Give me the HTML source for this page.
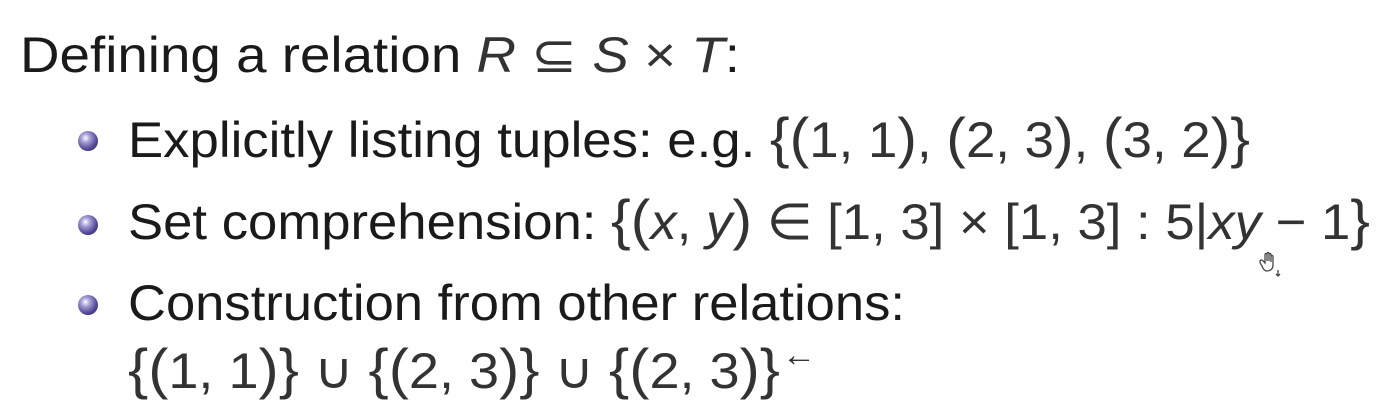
<!DOCTYPE html>
<html><head><meta charset="utf-8"><style>
html,body{margin:0;padding:0;background:#fff;width:1394px;height:418px;overflow:hidden}
svg{display:block}
text{font-family:"Liberation Sans","DejaVu Sans",sans-serif;fill:#1a1a1a;font-size:50px}
.m{fill:#333}
.i{font-style:italic}
.b{font-size:56px}
</style></head><body>
<svg width="1394" height="418" viewBox="0 0 1394 418">
<defs>
<radialGradient id="b" cx="0.38" cy="0.35" r="0.7">
<stop offset="0" stop-color="#ffffff"/>
<stop offset="0.3" stop-color="#a9a2d6"/>
<stop offset="0.75" stop-color="#5a4f9e"/>
<stop offset="1" stop-color="#3d3470"/>
</radialGradient>
</defs>
<text x="20" y="72" textLength="720" lengthAdjust="spacingAndGlyphs">Defining a relation <tspan class="i m">R</tspan> <tspan class="m">⊆</tspan> <tspan class="i m">S</tspan> <tspan class="m">×</tspan> <tspan class="i m">T</tspan>:</text>

<circle cx="88" cy="141" r="10" fill="url(#b)"/>
<text x="128" y="157" textLength="1122" lengthAdjust="spacingAndGlyphs">Explicitly listing tuples: e.g. <tspan class="m b">{(</tspan><tspan class="m">1, 1</tspan><tspan class="m b">)</tspan><tspan class="m">, </tspan><tspan class="m b">(</tspan><tspan class="m">2, 3</tspan><tspan class="m b">)</tspan><tspan class="m">, </tspan><tspan class="m b">(</tspan><tspan class="m">3, 2</tspan><tspan class="m b">)}</tspan></text>

<circle cx="88" cy="225" r="10" fill="url(#b)"/>
<text x="128" y="239" textLength="1242" lengthAdjust="spacingAndGlyphs">Set comprehension: <tspan class="m b">{(</tspan><tspan class="i m">x</tspan><tspan class="m">, </tspan><tspan class="i m">y</tspan><tspan class="m b">)</tspan><tspan class="m"> ∈ [1, 3] × [1, 3] : 5|</tspan><tspan class="i m">xy</tspan><tspan class="m"> − 1</tspan><tspan class="m b">}</tspan></text>

<circle cx="88" cy="305" r="10" fill="url(#b)"/>
<text x="128" y="320" textLength="777" lengthAdjust="spacingAndGlyphs">Construction from other relations:</text>

<text x="128" y="388" textLength="652" lengthAdjust="spacingAndGlyphs" class="m"><tspan class="b">{(</tspan>1, 1<tspan class="b">)}</tspan> ∪ <tspan class="b">{(</tspan>2, 3<tspan class="b">)}</tspan> ∪ <tspan class="b">{(</tspan>2, 3<tspan class="b">)}</tspan></text>
<text x="782" y="366" class="m" style="font-size:34px">←</text>

<g transform="translate(1258,252)" fill="none" stroke="#444" stroke-width="1.3">
<path d="M4 14 C2 11 1 9 3 8 C5 8 6 10 7 11 L7 3 C7 1 9 1 9 3 L9 9 L9 2 C9 0 11 0 11 2 L11 9 L11 3 C11 1 13 1 13 3 L13 10 L13 5 C13 3 15 3 15 5 L15 13 C15 17 12 19 9 19 C7 19 5 17 4 14 Z"/>
<path d="M20 18 L20 24 M18 22 L20 24 L22 22"/>
</g>
</svg>
</body></html>
